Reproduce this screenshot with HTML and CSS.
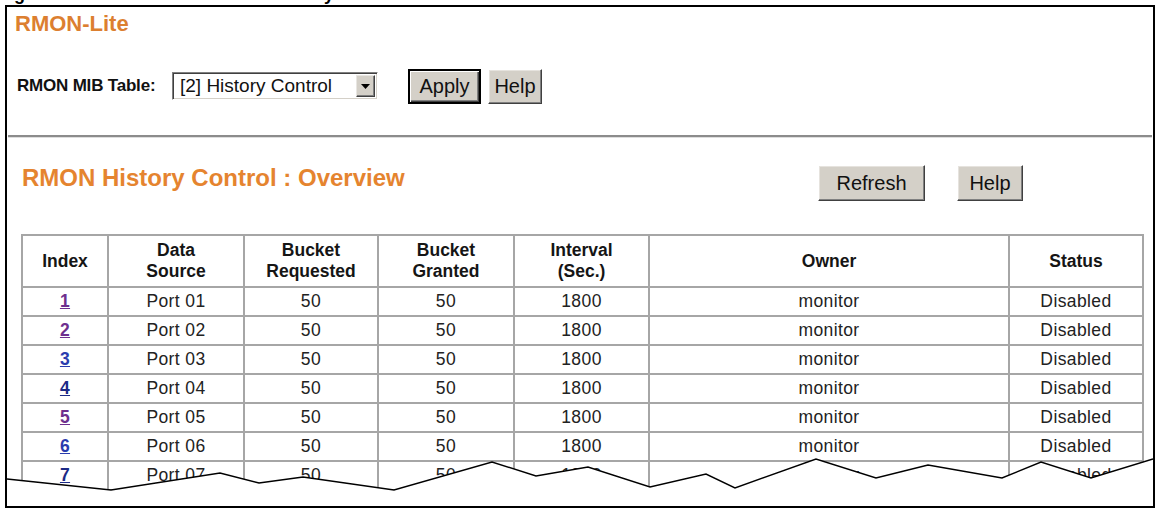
FILE: index.html
```html
<!DOCTYPE html>
<html lang="en">
<head>
<meta charset="utf-8">
<title>RMON-Lite History Control</title>
<link rel="stylesheet" href="styles.css">
</head>
<body>
<div class="caption"><div class="caption-line"><span class="cap-a">Figure 102</span><span class="cap-b">RMON: History</span></div></div>
<div class="frame">
  <section class="lite">
    <h1 class="lite-title">RMON-Lite</h1>
    <div class="mib-row">
      <span class="mib-label">RMON MIB Table:</span>
      <div class="select">
        <span class="select-text">[2] History Control</span>
        <span class="select-arrow"><svg width="9" height="5" viewBox="0 0 9 5"><path d="M0 0H9L4.5 5Z" fill="#000"/></svg></span>
      </div>
      <button class="btn btn-default btn-apply">Apply</button>
      <button class="btn btn-help-top">Help</button>
    </div>
  </section>
  <div class="sep"></div>
  <section class="overview">
    <div class="ov-head">
      <h2 class="ov-title">RMON History Control : Overview</h2>
      <div class="ov-actions">
        <button class="btn btn-refresh">Refresh</button>
        <button class="btn btn-help">Help</button>
      </div>
    </div>
    <table class="grid">
      <thead>
        <tr class="head-row">
          <th class="c1">Index</th>
          <th class="c2">Data<br>Source</th>
          <th class="c3">Bucket<br>Requested</th>
          <th class="c4">Bucket<br>Granted</th>
          <th class="c5">Interval<br>(Sec.)</th>
          <th class="c6">Owner</th>
          <th class="c7">Status</th>
        </tr>
      </thead>
      <tbody>
        <tr><td><a class="idx visited" href="#">1</a></td><td>Port 01</td><td>50</td><td>50</td><td>1800</td><td>monitor</td><td>Disabled</td></tr>
        <tr><td><a class="idx visited" href="#">2</a></td><td>Port 02</td><td>50</td><td>50</td><td>1800</td><td>monitor</td><td>Disabled</td></tr>
        <tr><td><a class="idx" href="#">3</a></td><td>Port 03</td><td>50</td><td>50</td><td>1800</td><td>monitor</td><td>Disabled</td></tr>
        <tr><td><a class="idx dark" href="#">4</a></td><td>Port 04</td><td>50</td><td>50</td><td>1800</td><td>monitor</td><td>Disabled</td></tr>
        <tr><td><a class="idx visited" href="#">5</a></td><td>Port 05</td><td>50</td><td>50</td><td>1800</td><td>monitor</td><td>Disabled</td></tr>
        <tr><td><a class="idx" href="#">6</a></td><td>Port 06</td><td>50</td><td>50</td><td>1800</td><td>monitor</td><td>Disabled</td></tr>
        <tr><td><a class="idx dark" href="#">7</a></td><td>Port 07</td><td>50</td><td>50</td><td>1800</td><td>monitor</td><td>Disabled</td></tr>
      </tbody>
    </table>
  </section>
  <svg class="tear" width="1146" height="51" viewBox="0 0 1146 51">
    <polygon fill="#fff" points="0,24 104,35 213,18 252,28 296,22 387,35 485,7 529,21 581,12 643,32 699,19 728,33 809,4 869,23 921,10 995,23 1034,7 1084,23 1146,4 1146,51 0,51"/>
    <polyline fill="none" stroke="#000" stroke-width="1.4" points="0,24 104,35 213,18 252,28 296,22 387,35 485,7 529,21 581,12 643,32 699,19 728,33 809,4 869,23 921,10 995,23 1034,7 1084,23 1146,4"/>
  </svg>
</div>
</body>
</html>
```

FILE: styles.css
```css
html, body {
  margin: 0;
  padding: 0;
  background: #fff;
}

body {
  font-family: "Liberation Sans", Arial, sans-serif;
  color: #1e1e1e;
  overflow: hidden;
}

/* cut-off figure caption above the frame */
.caption {
  height: 5px;
  overflow: hidden;
}

.caption-line {
  margin: -16px 0 0 -2px;
  font-size: 18px;
  line-height: 20px;
  font-weight: bold;
  color: #000;
  white-space: nowrap;
}

.cap-b {
  margin-left: 118px;
}

.frame {
  position: relative;
  box-sizing: border-box;
  margin: 0 0 0 5px;
  width: 1150px;
  height: 503px;
  border: 2px solid #000;
  overflow: hidden;
}

/* ---------- top: RMON-Lite ---------- */
.lite {
  padding: 4px 0 0 8px;
}

.lite-title {
  margin: 0;
  font-size: 22px;
  line-height: 26px;
  font-weight: bold;
  color: #dc7f30;
}

.mib-row {
  display: flex;
  align-items: center;
  height: 36px;
  margin-top: 31px;
  padding-left: 2px;
}

.mib-label {
  width: 155px;
  font-size: 17px;
  font-weight: bold;
  color: #111;
  letter-spacing: -0.2px;
}

.select {
  box-sizing: border-box;
  display: flex;
  align-items: center;
  width: 206px;
  height: 28px;
  margin-right: 30px;
  background: #fff;
  border: 1px solid;
  border-color: #808080 #ffffff #ffffff #808080;
  box-shadow: inset 1px 1px 0 #404040, inset -1px -1px 0 #d4d0c8;
}

.select-text {
  flex: 1;
  padding-left: 7px;
  font-size: 19px;
  color: #111;
  white-space: nowrap;
}

.select-arrow {
  box-sizing: border-box;
  display: flex;
  align-items: center;
  justify-content: center;
  width: 19px;
  height: 22px;
  margin-right: 2px;
  background: #d4d0c8;
  border: 1px solid;
  border-color: #e8e6e2 #404040 #404040 #e8e6e2;
  box-shadow: inset -1px -1px 0 #808080;
}

/* ---------- buttons ---------- */
.btn {
  box-sizing: border-box;
  padding: 0;
  font-family: "Liberation Sans", Arial, sans-serif;
  font-size: 20px;
  color: #111;
  background: #d4d0c8;
  border: 1px solid;
  border-color: #ffffff #404040 #404040 #ffffff;
  box-shadow: inset -1px -1px 0 #808080, inset 1px 1px 0 #e6e3de;
  cursor: pointer;
}

.btn-default {
  border: 2px solid #000;
  box-shadow: inset 1px 1px 0 #fff, inset -1px -1px 0 #404040, inset -2px -2px 0 #808080;
}

.btn-apply {
  width: 73px;
  height: 35px;
  margin-right: 7px;
}

.btn-help-top {
  width: 54px;
  height: 35px;
}

/* ---------- separator ---------- */
.sep {
  margin: 31px 1px 0 1px;
  height: 0;
  border-top: 2px solid #8c8c8c;
  border-bottom: 1px solid #dedede;
}

/* ---------- overview ---------- */
.overview {
  padding: 26px 0 0 14px;
}

.ov-head {
  display: flex;
  align-items: flex-start;
  height: 37px;
}

.ov-title {
  margin: 0 0 0 1px;
  font-size: 24px;
  line-height: 28px;
  font-weight: bold;
  color: #e5842f;
}

.ov-actions {
  display: flex;
  gap: 32px;
  margin: 1px 130px 0 auto;
}

.btn-refresh {
  width: 107px;
  height: 36px;
}

.btn-help {
  width: 66px;
  height: 36px;
}

/* ---------- table ---------- */
.grid {
  margin-top: 33px;
  width: 1123px;
  table-layout: fixed;
  border-collapse: separate;
  border-spacing: 0;
  border-top: 2px solid #a6a6a6;
  border-left: 2px solid #a6a6a6;
}

.grid th,
.grid td {
  box-sizing: border-box;
  padding: 0;
  text-align: center;
  vertical-align: middle;
  border-right: 2px solid #a6a6a6;
  border-bottom: 2px solid #a6a6a6;
}

.grid th {
  font-size: 17.5px;
  line-height: 21px;
  font-weight: bold;
  color: #151515;
}

.grid td {
  font-size: 17.5px;
  letter-spacing: 0.4px;
  color: #222;
}

.head-row {
  height: 52px;
}

.grid tbody tr {
  height: 29px;
}

.c1 { width: 86px; }
.c2 { width: 136px; }
.c3 { width: 134px; }
.c4 { width: 136px; }
.c5 { width: 135px; }
.c6 { width: 360px; }
.c7 { width: 134px; }

.idx {
  font-weight: bold;
  text-decoration: underline;
  color: #2a3cae;
}

.idx.visited {
  color: #6e2f8e;
}

.idx.dark {
  color: #1c2a86;
}

/* ---------- torn-edge overlay ---------- */
.tear {
  position: absolute;
  left: 0;
  top: 448px;
  display: block;
}
```
